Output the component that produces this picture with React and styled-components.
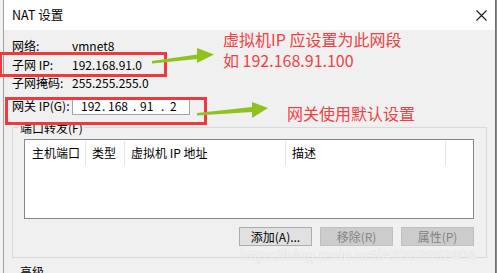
import React from 'react';
import styled, { createGlobalStyle } from 'styled-components';

const Global = createGlobalStyle`
  html, body { margin: 0; padding: 0; }
  body {
    width: 497px; height: 273px; overflow: hidden;
    background: #e9e9e9;
    font-family: "Noto Sans CJK SC", "Noto Sans", sans-serif;
    font-size: 12px; color: #000;
  }
`;

const Stage = styled.div`
  position: relative;
  width: 497px; height: 273px;
  box-sizing: border-box;
  padding-left: 3px;
  display: flex;
  background: linear-gradient(to right, #f2f2f2 0 3px, #8a8a8a 3px);
`;

const Window = styled.div`
  width: 493px; height: 273px;
  box-sizing: border-box;
  border-left: 1px solid #a0a0a0;
  border-right: 1px solid #6e6e6e;
  background: #f0f0f0;
  display: flex; flex-direction: column;
  overflow: hidden;
`;

const TitleBar = styled.div`
  height: 30px; flex-shrink: 0;
  background: #fff;
  display: flex; align-items: center; justify-content: space-between;
  padding: 0 8px 0 8px;
`;

const Title = styled.span`
  font-size: 12.5px; line-height: 1;
  margin-top: 1px;
`;

const CloseBtn = styled.svg`
  width: 11px; height: 11px; display: block;
`;

const Body = styled.div`
  padding: 7px 8px 0 8px;
  display: flex; flex-direction: column;
`;

const Form = styled.div`
  display: grid;
  grid-template-columns: 60px auto;
  grid-auto-rows: 18.5px;
  align-items: center;
`;

const Label = styled.span`
  white-space: nowrap; line-height: 18px;
`;

const Value = styled.span`
  line-height: 18px;
`;

const GatewayRow = styled.div`
  display: grid;
  grid-template-columns: 60px 118px;
  align-items: center;
  margin-top: 4px;
  height: 18px;
`;

const IpBox = styled.div`
  height: 18px; box-sizing: border-box;
  background: #fff;
  border: 1px solid #a5a5a5;
  border-top-color: #8f8f8f;
  display: flex; align-items: center;
  padding-left: 8px; padding-top: 1px;
`;

const IpField = styled.span`
  width: ${p => p.$w}px;
  line-height: 16px;
`;

const Dot = styled.span`
  width: ${p => p.$w}px;
  line-height: 16px;
`;

const Group = styled.fieldset`
  margin: 5px 0 0 0;
  min-width: 0;
  border: 1px solid #d9d9d9;
  padding: 4px 12px 11px 11px;
  display: flex; flex-direction: column;
`;

const Legend = styled.legend`
  padding: 0 1px;
  margin-left: -5px;
  line-height: 15px;
  color: #000;
`;

const ListView = styled.div`
  height: 80px; box-sizing: border-box;
  border: 1px solid #828790;
  background: #fff;
`;

const Header = styled.div`
  display: flex; height: 25px; align-items: stretch;
  padding-top: 1px;
`;

const Col = styled.div`
  width: ${p => p.$w}px;
  flex-shrink: 0;
  box-sizing: border-box;
  padding-left: ${p => p.$pl}px;
  border-right: ${p => (p.$last ? 'none' : '1px solid #e5e5e5')};
  display: flex; align-items: center;
  white-space: nowrap;
  padding-bottom: 1px;
`;

const Buttons = styled.div`
  display: flex; justify-content: flex-end; gap: 8px;
  margin-top: 8px;
`;

const Button = styled.button`
  width: 73px; height: 19px;
  box-sizing: border-box;
  font-family: inherit; font-size: 12px;
  padding: 0;
  border: 1px solid ${p => (p.disabled ? '#bfbfbf' : '#adadad')};
  background: ${p => (p.disabled ? '#cccccc' : '#e1e1e1')};
  color: ${p => (p.disabled ? '#838383' : '#000')};
  line-height: 17px;
`;

const Advanced = styled.div`
  margin: 6px 0 0 8px;
  line-height: 15px;
`;

const Overlay = styled.div`
  position: absolute; inset: 0;
  pointer-events: none;
`;

const RedBox = styled.div`
  position: absolute;
  left: ${p => p.$x}px; top: ${p => p.$y}px;
  width: ${p => p.$w}px; height: ${p => p.$h}px;
  box-sizing: border-box;
  border: 3px solid #ee3a3c;
`;

const Note = styled.div`
  position: absolute;
  left: ${p => p.$x}px; top: ${p => p.$y}px;
  color: #ef4143;
  font-size: 16px; line-height: 21px;
  white-space: nowrap;
`;

const Arrows = styled.svg`
  position: absolute; left: 0; top: 0;
  width: 497px; height: 273px;
`;

const Watermark = styled.div`
  position: absolute;
  left: 240px; top: 245px;
  font-family: "Liberation Sans", Arial, sans-serif;
  font-size: 15.5px; line-height: 20px;
  color: rgba(255, 255, 255, 0.75);
  text-shadow: 0 0 1px rgba(120, 120, 120, 0.35);
  white-space: nowrap;
  letter-spacing: -0.1px;
`;

export default function App() {
  return (
    <>
      <Global />
      <Stage>
        <Window>
          <TitleBar>
            <Title>NAT 设置</Title>
            <CloseBtn viewBox="0 0 11 11">
              <path d="M0.5 0.5 L10.5 10.5 M10.5 0.5 L0.5 10.5" stroke="#1a1a1a" strokeWidth="1.1" fill="none" />
            </CloseBtn>
          </TitleBar>
          <Body>
            <Form>
              <Label>网络:</Label><Value>vmnet8</Value>
              <Label>子网 IP:</Label><Value>192.168.91.0</Value>
              <Label>子网掩码:</Label><Value>255.255.255.0</Value>
            </Form>
            <GatewayRow>
              <Label>网关 IP(G):</Label>
              <IpBox>
                <IpField $w={21}>192</IpField>
                <Dot $w={6}>.</Dot>
                <IpField $w={25}>168</IpField>
                <Dot $w={7}>.</Dot>
                <IpField $w={21}>91</IpField>
                <Dot $w={9}>.</Dot>
                <IpField $w={12}>2</IpField>
              </IpBox>
            </GatewayRow>
            <Group>
              <Legend>端口转发(F)</Legend>
              <ListView>
                <Header>
                  <Col $w={61} $pl={7}>主机端口</Col>
                  <Col $w={39} $pl={6}>类型</Col>
                  <Col $w={161} $pl={6}>虚拟机 IP 地址</Col>
                  <Col $w={160} $pl={6}>描述</Col>
                  <Col $w={26} $pl={0} $last />
                </Header>
              </ListView>
              <Buttons>
                <Button>添加(A)...</Button>
                <Button disabled>移除(R)</Button>
                <Button disabled>属性(P)</Button>
              </Buttons>
            </Group>
            <Advanced>高级</Advanced>
          </Body>
        </Window>
        <Overlay>
          <Watermark>https://blog.csdn.net/A2382662404</Watermark>
          <RedBox $x={-1} $y={52} $w={168} $h={25} />
          <RedBox $x={5} $y={97} $w={202} $h={28} />
          <Arrows viewBox="0 0 497 273">
            <polygon points="152,61 197,54.5 197,48 214,54.5 197,63 197,59 152,63.5" fill="#8dc21f" />
            <polygon points="197,113 252,107 252,102 268,108 252,118 252,112 197,115.5" fill="#8dc21f" />
          </Arrows>
          <Note $x={223} $y={29}>虚拟机IP 应设置为此网段<br />如 192.168.91.100</Note>
          <Note $x={287} $y={103}>网关使用默认设置</Note>
        </Overlay>
      </Stage>
    </>
  );
}
